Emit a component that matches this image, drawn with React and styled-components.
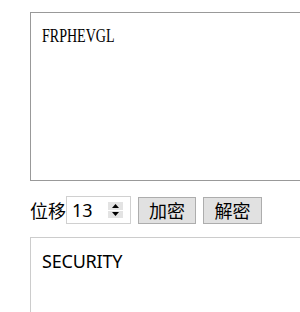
import React from 'react';
import styled, { createGlobalStyle } from 'styled-components';

const GlobalStyle = createGlobalStyle`
  html, body {
    margin: 0;
    padding: 0;
    background: #fff;
    overflow: hidden;
  }
`;

const Page = styled.div`
  box-sizing: border-box;
  padding: 12px 0 0 30px;
  width: 300px;
  height: 312px;
  overflow: hidden;
`;

const Box = styled.div`
  box-sizing: border-box;
  width: 400px;
  height: ${(p) => p.h}px;
  border: 1px solid ${(p) => p.border};
  padding: ${(p) => p.pad};
  background: #fff;
`;

const SerifText = styled.span`
  display: inline-block;
  font-family: "Liberation Serif", "Noto Sans CJK SC", serif;
  font-size: 18px;
  line-height: 18px;
  color: #000;
  transform: scaleX(0.78);
  transform-origin: left center;
  white-space: nowrap;
`;

const SansText = styled.span`
  display: inline-block;
  font-family: "Noto Sans", "Open Sans", sans-serif;
  font-size: 18px;
  line-height: 20px;
  color: #000;
  letter-spacing: -0.2px;
`;

const Controls = styled.div`
  display: flex;
  align-items: center;
  height: 28px;
  margin: 15px 0 13px;
  font-family: "Noto Sans CJK SC", "Noto Sans", sans-serif;
`;

const Label = styled.span`
  font-size: 18px;
  line-height: 28px;
  color: #000;
`;

const NumberBox = styled.div`
  box-sizing: border-box;
  width: 65px;
  height: 28px;
  border: 1px solid #d0d0d0;
  display: flex;
  align-items: center;
  padding: 0 7px 0 5px;
  margin-right: 7px;
`;

const NumberValue = styled.span`
  flex: 1;
  font-family: "Noto Sans", "Open Sans", sans-serif;
  font-size: 18px;
  color: #000;
  line-height: 26px;
`;

const Spinner = styled.div`
  width: 15px;
  height: 16px;
  display: flex;
  flex-direction: column;
  gap: 1px;
  background: #fff;
`;

const SpinHalf = styled.div`
  flex: 1;
  background: #e3e3e3;
  display: flex;
  align-items: center;
  justify-content: center;
`;

const Button = styled.button`
  box-sizing: border-box;
  width: ${(p) => p.w}px;
  height: 27px;
  margin-right: 7px;
  padding: 0;
  border: 1px solid #adadad;
  background: #e1e1e1;
  font-family: "Noto Sans CJK SC", sans-serif;
  font-size: 18px;
  line-height: 25px;
  color: #000;
`;

const Arrow = ({ up }) => (
  <svg width="7" height="4" viewBox="0 0 7 4">
    <polygon points={up ? '3.5,0 7,4 0,4' : '0,0 7,0 3.5,4'} fill="#000" />
  </svg>
);

export default function App() {
  return (
    <Page>
      <GlobalStyle />
      <Box h={169} border="#999" pad="14px 11px">
        <SerifText>FRPHEVGL</SerifText>
      </Box>
      <Controls>
        <Label>位移</Label>
        <NumberBox>
          <NumberValue>13</NumberValue>
          <Spinner>
            <SpinHalf><Arrow up /></SpinHalf>
            <SpinHalf><Arrow /></SpinHalf>
          </Spinner>
        </NumberBox>
        <Button w={58}>加密</Button>
        <Button w={59}>解密</Button>
      </Controls>
      <Box h={120} border="#cccccc" pad="13px 11px">
        <SansText>SECURITY</SansText>
      </Box>
    </Page>
  );
}
